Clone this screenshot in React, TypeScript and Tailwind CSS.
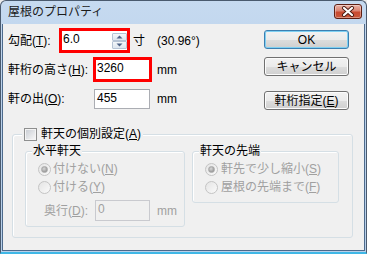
import React from "react";

const U = ({ children }: { children: React.ReactNode }) => (
  <span className="underline underline-offset-[1px]">{children}</span>
);

const Btn = ({ children, def }: { children: React.ReactNode; def?: boolean }) => (
  <div
    className={
      "w-[85px] h-[19px] rounded-[3px] border flex items-center justify-center text-[12px] leading-[14px] text-black bg-[linear-gradient(#f2f2f2_0%,#ebebeb_50%,#dddddd_51%,#cfcfcf_100%)] " +
      (def
        ? "border-[#3c7fb1] shadow-[inset_0_0_0_1px_#7fd0f2]"
        : "border-[#707070] shadow-[inset_0_0_0_1px_#fcfcfc]")
    }
  >
    {children}
  </div>
);

const Radio = ({ checked }: { checked?: boolean }) => (
  <div className="w-[13px] h-[13px] rounded-full border border-[#c4c4c4] bg-[linear-gradient(135deg,#e4e4e4,#fafafa)] flex items-center justify-center shrink-0">
    {checked && (
      <div className="w-[7px] h-[7px] rounded-full bg-[radial-gradient(circle_at_40%_35%,#d8d8d8,#9c9c9c_70%)] border border-[#a8a8a8]" />
    )}
  </div>
);

export default function App() {
  return (
    <div className="w-[367px] h-[254px] overflow-hidden bg-[#ececec] font-['Liberation_Sans','Noto_Sans_CJK_JP',sans-serif]">
      <div className="w-[367px] h-[254px] flex flex-col rounded-t-[6px] border-t border-x border-[#4a5a6e] bg-[linear-gradient(#c6daf0,#b9d0ea_40%,#b7cfe9)] border-b-[2px] border-b-[#3fb7e6]">
        {/* title bar */}
        <div className="h-[23px] flex items-center justify-between pl-[7px] pr-[4px] shrink-0">
          <span className="text-[12px] leading-[14px] text-[#1b1b1b] mt-[-1px]">屋根のプロパティ</span>
          <div className="w-[28px] h-[15px] mt-[-3px] rounded-[3px] border border-[#5e1f14] bg-[linear-gradient(#eab2a6_0%,#db8472_45%,#c94a31_55%,#c9583c_100%)] shadow-[inset_0_0_0_1px_rgba(255,255,255,0.35)] flex items-center justify-center">
            <svg width="14" height="11" viewBox="0 0 14 11">
              <path d="M3 2 L11 9 M11 2 L3 9" stroke="#4a1a12" strokeWidth="4" strokeLinecap="round" />
              <path d="M3 2 L11 9 M11 2 L3 9" stroke="#ffffff" strokeWidth="2.2" strokeLinecap="round" />
            </svg>
          </div>
        </div>
        {/* client */}
        <div className="flex-1 mx-[1px] mb-[1px] border border-t-0 border-[#4d6a8c] bg-[#f0f0f0] text-[12px] leading-[14px] text-black">
          <div className="flex justify-between">
            {/* left fields */}
            <div className="pl-[5px] pt-[4px] flex flex-col gap-[4px]">
              <div className="h-[25px] flex items-center">
                <span className="w-[51px]">
                  勾配(<U>T</U>):
                </span>
                <div className="w-[71px] h-[25px] border-[3px] border-[#ff0000] bg-white flex items-center justify-between pl-[1px]">
                  <span className="mb-[3px]">6.0</span>
                  <div className="w-[15px] h-[16px] flex flex-col gap-0 mt-[1px]">
                    <div className="h-[8px] border border-[#b6c3d4] rounded-[1px] bg-[linear-gradient(#f4f7fa,#dde5ee)] flex items-center justify-center">
                      <svg width="7" height="4" viewBox="0 0 7 4">
                        <path d="M0.5 3.5 L3.5 0.5 L6.5 3.5 Z" fill="#4d6185" />
                      </svg>
                    </div>
                    <div className="h-[8px] border border-[#b6c3d4] rounded-[1px] bg-[linear-gradient(#f4f7fa,#dde5ee)] flex items-center justify-center">
                      <svg width="7" height="4" viewBox="0 0 7 4">
                        <path d="M0.5 0.5 L3.5 3.5 L6.5 0.5 Z" fill="#4d6185" />
                      </svg>
                    </div>
                  </div>
                </div>
                <span className="ml-[3px]">寸</span>
                <span className="ml-[12px]">(30.96°)</span>
              </div>
              <div className="h-[25px] flex items-center">
                <span className="w-[85px]">
                  軒桁の高さ(<U>H</U>):
                </span>
                <div className="w-[59px] h-[25px] border-[3px] border-[#ff0000] bg-white flex items-center pl-[1px]">
                  <span className="mb-[3px]">3260</span>
                </div>
                <span className="ml-[5px]">mm</span>
              </div>
              <div className="h-[25px] flex items-center">
                <span className="w-[86px]">
                  軒の出(<U>O</U>):
                </span>
                <div className="w-[56px] h-[20px] border border-[#abadb3] border-t-[#a0a3aa] bg-white flex items-center pl-[2px]">
                  <span className="mb-[2px]">455</span>
                </div>
                <span className="ml-[7px]">mm</span>
              </div>
            </div>
            {/* right buttons */}
            <div className="pt-[6px] pr-[15px] flex flex-col">
              <Btn def>OK</Btn>
              <div className="mt-[8px]">
                <Btn>キャンセル</Btn>
              </div>
              <div className="mt-[15px]">
                <Btn>
                  軒桁指定(<U>E</U>)
                </Btn>
              </div>
            </div>
          </div>
          {/* group */}
          <fieldset className="ml-[9px] mt-[16px] w-[341px] border border-[#d5dfe5] rounded-[3px] pl-[12px] pt-[3px] pb-[10px] shadow-[inset_1px_1px_0_#ffffff]">
            <legend className="ml-[-3px] px-[2px] flex items-center gap-[4px] bg-[#f0f0f0] h-[14px]">
              <div className="w-[13px] h-[13px] border border-[#8e8f8f] bg-[#f4f4f4] p-[1px]">
                <div className="w-full h-full bg-[linear-gradient(135deg,#cbcfd5,#f6f6f6)]" />
              </div>
              <span>
                軒天の個別設定(<U>A</U>)
              </span>
            </legend>
            <div className="flex items-start">
              <fieldset className="w-[160px] border border-[#d5dfe5] rounded-[3px] pl-[6px] pt-[2px] pb-[5px] shadow-[inset_1px_1px_0_#ffffff]">
                <legend className="px-[1px] h-[14px] bg-[#f0f0f0]">水平軒天</legend>
                <div className="text-[#a0a0a0]">
                  <div className="h-[18px] flex items-center gap-[2px] ml-[6px]">
                    <Radio checked />
                    <span>
                      付けない(<U>N</U>)
                    </span>
                  </div>
                  <div className="h-[18px] flex items-center gap-[2px] ml-[6px]">
                    <Radio />
                    <span>
                      付ける(<U>Y</U>)
                    </span>
                  </div>
                  <div className="h-[21px] mt-[4px] flex items-center ml-[12px]">
                    <span className="w-[51px]">
                      奥行(<U>D</U>):
                    </span>
                    <div className="w-[55px] h-[21px] border border-[#c9cacf] bg-[#f0f0f0] flex items-center pl-[2px]">
                      <span className="mb-[4px]">0</span>
                    </div>
                    <span className="ml-[7px]">mm</span>
                  </div>
                </div>
              </fieldset>
              <fieldset className="ml-[7px] w-[147px] border border-[#d5dfe5] rounded-[3px] pl-[6px] pt-[2px] pb-[6px] shadow-[inset_1px_1px_0_#ffffff]">
                <legend className="px-[1px] h-[14px] bg-[#f0f0f0]">軒天の先端</legend>
                <div className="text-[#a0a0a0]">
                  <div className="h-[18px] flex items-center gap-[3px] ml-[6px]">
                    <Radio checked />
                    <span>
                      軒先で少し縮小(<U>S</U>)
                    </span>
                  </div>
                  <div className="h-[18px] flex items-center gap-[3px] ml-[6px]">
                    <Radio />
                    <span>
                      屋根の先端まで(<U>F</U>)
                    </span>
                  </div>
                </div>
              </fieldset>
            </div>
          </fieldset>
        </div>
      </div>
    </div>
  );
}
